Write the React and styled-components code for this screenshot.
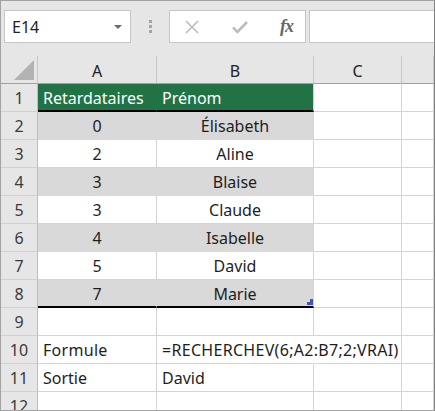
import React from "react";
import styled, { createGlobalStyle } from "styled-components";

const GlobalStyle = createGlobalStyle`
  body {
    margin: 0;
    font-family: "Noto Sans", "Open Sans", sans-serif;
  }
`;

const Frame = styled.div`
  width: 435px;
  height: 411px;
  box-sizing: border-box;
  border: 1px solid #a3a3a3;
  border-right-color: #7f7f7f;
  background: #e6e6e6;
  overflow: hidden;
  display: flex;
  flex-direction: column;
`;

const Toolbar = styled.div`
  height: 55px;
  box-sizing: border-box;
  padding: 9px 0 0 3px;
  display: flex;
  align-items: flex-start;
  flex-shrink: 0;
`;

const Box = styled.div`
  height: 33px;
  box-sizing: border-box;
  background: #fff;
  border: 1px solid #c6c6c6;
  display: flex;
  align-items: center;
`;

const NameBox = styled(Box)`
  width: 127px;
  padding: 0 8px 0 7px;
  justify-content: space-between;
  font-size: 16px;
  color: #222;
`;

const Caret = styled.span`
  width: 0;
  height: 0;
  border-left: 4px solid transparent;
  border-right: 4px solid transparent;
  border-top: 4px solid #6b6b6b;
  margin-top: 1px;
`;

const Grip = styled.div`
  width: 38px;
  display: flex;
  flex-direction: column;
  align-items: center;
  gap: 2px;
  padding-top: 10px;
  span {
    width: 3px;
    height: 3px;
    background: #a4a4a4;
  }
`;

const ButtonGroup = styled(Box)`
  width: 137px;
  padding: 0 12px 0 14px;
  justify-content: space-between;
`;

const FxText = styled.span`
  font-family: "Liberation Serif", "DejaVu Serif", serif;
  font-style: italic;
  font-weight: bold;
  font-size: 18px;
  color: #666;
  letter-spacing: -1px;
`;

const FormulaInput = styled(Box)`
  flex: 1;
  margin-left: 3px;
  border-right: none;
`;

const Sheet = styled.div`
  flex: 1;
  display: flex;
  flex-direction: column;
  background: #fff;
`;

const Row = styled.div`
  display: flex;
  height: 28px;
  flex-shrink: 0;
`;

const widths = [37, 119, 157, 88];

const Cell = styled.div`
  position: relative;
  box-sizing: border-box;
  width: ${(p) => (p.$col < 4 ? widths[p.$col] + "px" : "auto")};
  flex: ${(p) => (p.$col < 4 ? "0 0 auto" : "1")};
  border-right: 1px solid ${(p) => p.$edge || "#d4d4d4"};
  border-bottom: ${(p) => (p.$thick ? "2px solid #000" : `1px solid ${p.$fill && p.$fill !== "#fff" ? p.$fill : "#d4d4d4"}`)};
  background: ${(p) => p.$fill || "#fff"};
  color: ${(p) => (p.$light ? "#fff" : "#1e1e1e")};
  font-size: 16px;
  display: flex;
  align-items: center;
  justify-content: ${(p) => (p.$center ? "center" : "flex-start")};
  padding-left: ${(p) => (p.$center ? 0 : 5)}px;
  padding-top: 1px;
  white-space: nowrap;
  overflow: visible;
  letter-spacing: ${(p) => (p.$spread ? "0.3px" : "normal")};
  z-index: ${(p) => (p.$over ? 1 : 0)};
`;

const ColHead = styled.div`
  position: relative;
  box-sizing: border-box;
  width: ${(p) => (p.$col < 4 ? widths[p.$col] + "px" : "auto")};
  flex: ${(p) => (p.$col < 4 ? "0 0 auto" : "1")};
  background: #e6e6e6;
  border-right: 1px solid #c8c8c8;
  border-bottom: 1px solid #a0a0a0;
  display: flex;
  align-items: center;
  justify-content: center;
  font-size: 16px;
  color: #222;
  padding-top: 2px;
`;

const Corner = styled.span`
  position: absolute;
  right: 3px;
  bottom: 3px;
  width: 0;
  height: 0;
  border-left: 20px solid transparent;
  border-bottom: 20px solid #b3b3b3;
`;

const RowHead = styled.div`
  box-sizing: border-box;
  width: 37px;
  flex: 0 0 auto;
  background: #e6e6e6;
  border-right: 1px solid #bdbdbd;
  border-bottom: 1px solid #d0d0d0;
  display: flex;
  align-items: center;
  justify-content: center;
  font-size: 16px;
  color: #3a3a3a;
  padding-top: 1px;
`;

const Handle = styled.span`
  position: absolute;
  right: 0;
  bottom: 1px;
  width: 6px;
  height: 6px;
  background: #3c55bc;
  clip-path: polygon(100% 0, 100% 100%, 0 100%, 0 50%, 50% 50%, 50% 0);
`;

const GRAY = "#d9d9d9";
const GREEN = "#217346";

const data = [
  [0, "Élisabeth"],
  [2, "Aline"],
  [3, "Blaise"],
  [3, "Claude"],
  [4, "Isabelle"],
  [5, "David"],
  [7, "Marie"],
];

const XIcon = () => (
  <svg width="16" height="16" viewBox="0 0 16 16">
    <path d="M2 2 L14 14 M14 2 L2 14" stroke="#bcbcbc" strokeWidth="1.6" fill="none" />
  </svg>
);

const CheckIcon = () => (
  <svg width="18" height="16" viewBox="0 0 18 16">
    <path d="M2 8.5 L6.5 13 L16 3" stroke="#bcbcbc" strokeWidth="2.6" fill="none" />
  </svg>
);

const App = () => {
  return (
    <>
      <GlobalStyle />
      <Frame>
        <Toolbar>
          <NameBox>
            E14
            <Caret />
          </NameBox>
          <Grip>
            <span />
            <span />
            <span />
          </Grip>
          <ButtonGroup>
            <XIcon />
            <CheckIcon />
            <FxText>fx</FxText>
          </ButtonGroup>
          <FormulaInput />
        </Toolbar>
        <Sheet>
          <Row>
            <ColHead $col={0}>
              <Corner />
            </ColHead>
            <ColHead $col={1}>A</ColHead>
            <ColHead $col={2}>B</ColHead>
            <ColHead $col={3}>C</ColHead>
            <ColHead $col={4} />
          </Row>
          <Row>
            <RowHead>1</RowHead>
            <Cell $col={1} $fill={GREEN} $edge={GREEN} $light $thick>
              Retardataires
            </Cell>
            <Cell $col={2} $fill={GREEN} $light $thick>
              Prénom
            </Cell>
            <Cell $col={3} />
            <Cell $col={4} />
          </Row>
          {data.map(([n, name], i) => {
            const fill = i % 2 === 0 ? GRAY : "#fff";
            const last = i === data.length - 1;
            return (
              <Row key={i}>
                <RowHead>{i + 2}</RowHead>
                <Cell $col={1} $fill={fill} $edge={i % 2 === 0 ? GRAY : undefined} $center $thick={last}>
                  {n}
                </Cell>
                <Cell $col={2} $fill={fill} $center $thick={last}>
                  {name}
                  {last && <Handle />}
                </Cell>
                <Cell $col={3} />
                <Cell $col={4} />
              </Row>
            );
          })}
          <Row>
            <RowHead>9</RowHead>
            <Cell $col={1} />
            <Cell $col={2} />
            <Cell $col={3} />
            <Cell $col={4} />
          </Row>
          <Row>
            <RowHead>10</RowHead>
            <Cell $col={1} $spread>Formule</Cell>
            <Cell $col={2} $edge="#fff" $over $spread>
              =RECHERCHEV(6;A2:B7;2;VRAI)
            </Cell>
            <Cell $col={3} />
            <Cell $col={4} />
          </Row>
          <Row>
            <RowHead>11</RowHead>
            <Cell $col={1}>Sortie</Cell>
            <Cell $col={2}>David</Cell>
            <Cell $col={3} />
            <Cell $col={4} />
          </Row>
          <Row>
            <RowHead>12</RowHead>
            <Cell $col={1} />
            <Cell $col={2} />
            <Cell $col={3} />
            <Cell $col={4} />
          </Row>
        </Sheet>
      </Frame>
    </>
  );
};

export default App;
